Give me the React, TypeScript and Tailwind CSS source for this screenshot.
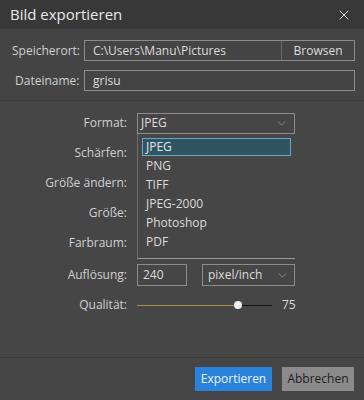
import { ChevronDown, X } from "lucide-react";

const formats = ["JPEG", "PNG", "TIFF", "JPEG-2000", "Photoshop", "PDF"];

function Row({ label, children }: { label: string; children?: React.ReactNode }) {
  return (
    <div className="flex h-[30px] items-center">
      <div className="w-[128px] pr-[1px] text-right text-[#d0d0d0]">{label}</div>
      <div className="ml-[9px] flex items-center">{children}</div>
    </div>
  );
}

export default function App() {
  return (
    <div
      className="flex h-[400px] w-[364px] flex-col bg-[#464646] text-[12px] text-[#dcdcdc]"
      style={{ fontFamily: '"Open Sans", "Noto Sans", sans-serif' }}
    >
      <div className="flex h-[29px] items-center justify-between bg-[#383838] pl-[10px] pr-[12px]">
        <span className="text-[15px] text-[#e8e8e8]">Bild exportieren</span>
        <X size={16} strokeWidth={1.5} className="text-[#d8d8d8]" />
      </div>

      <div className="flex flex-col gap-[9px] border-b border-b-[#3a3a3a] bg-[#444444] px-[9px] pb-[9px] pt-[11px]">
        <div className="flex h-[21px] items-center">
          <span className="w-[75px] pl-[3px] text-[#d0d0d0]">Speicherort:</span>
          <div className="flex h-[21px] flex-1 items-center border border-[#8c8c8c]">
            <span className="flex-1 pl-[8px]">C:\Users\Manu\Pictures</span>
            <span className="flex h-full w-[73px] items-center justify-center border-l border-l-[#6a6a6a]">
              Browsen
            </span>
          </div>
        </div>
        <div className="flex h-[21px] items-center">
          <span className="w-[75px] pl-[6px] text-[#d0d0d0]">Dateiname:</span>
          <div className="flex h-[21px] flex-1 items-center border border-[#8c8c8c] pl-[8px]">grisu</div>
        </div>
      </div>

      <div className="relative flex flex-1 flex-col pt-[7px]">
        <Row label="Format:">
          <div className="flex h-[21px] w-[158px] items-center justify-between border border-[#8c8c8c] pl-[3px] pr-[6px]">
            <span>JPEG</span>
            <ChevronDown size={13} strokeWidth={1.5} className="text-[#9a9a9a]" />
          </div>
        </Row>
        <Row label="Schärfen:" />
        <Row label="Größe ändern:" />
        <Row label="Größe:" />
        <Row label="Farbraum:" />
        <div className="h-[2px]" />
        <Row label="Auflösung:">
          <div className="flex h-[22px] w-[50px] items-center border border-[#8c8c8c] pl-[5px]">240</div>
          <div className="ml-[15px] flex h-[22px] w-[93px] items-center justify-between border border-[#8c8c8c] pl-[5px] pr-[5px]">
            <span>pixel/inch</span>
            <ChevronDown size={13} strokeWidth={1.5} className="text-[#9a9a9a]" />
          </div>
        </Row>
        <Row label="Qualität:">
          <div className="relative flex h-[10px] w-[135px] items-center">
            <div className="h-[1px] w-[101px] bg-[#a88a4e]" />
            <div className="h-[1px] flex-1 bg-[#111111]" />
            <div className="absolute left-[97px] top-[1px] h-[8px] w-[8px] rounded-full bg-[#f0f0f0]" />
          </div>
          <span className="ml-[10px]">75</span>
        </Row>

        <div className="absolute left-[137px] top-[33px] flex w-[158px] flex-col border-b border-l border-b-[#9a9a9a] border-l-[#6e6e6e] bg-[#464646] pb-[7px] pt-[4px]">
          {formats.map((f, i) => (
            <div
              key={f}
              className={
                i === 0
                  ? "mx-[4px] flex h-[18px] items-center border border-[#6aa6c4] bg-[#2f5563] pl-[3px] text-[#e6e6e6]"
                  : "mx-[4px] flex h-[19px] items-center pl-[4px]"
              }
            >
              {f}
            </div>
          ))}
        </div>
      </div>

      <div className="flex h-[43px] items-center justify-end gap-[10px] border-t border-t-[#3c3c3c] pr-[10px]">
        <button className="flex h-[24px] w-[77px] items-center justify-center bg-[#2a83db] text-[#eef4fb]">
          Exportieren
        </button>
        <button className="flex h-[24px] w-[72px] items-center justify-center bg-[#8b8b8b] text-[#1e1e1e]">
          Abbrechen
        </button>
      </div>
    </div>
  );
}
